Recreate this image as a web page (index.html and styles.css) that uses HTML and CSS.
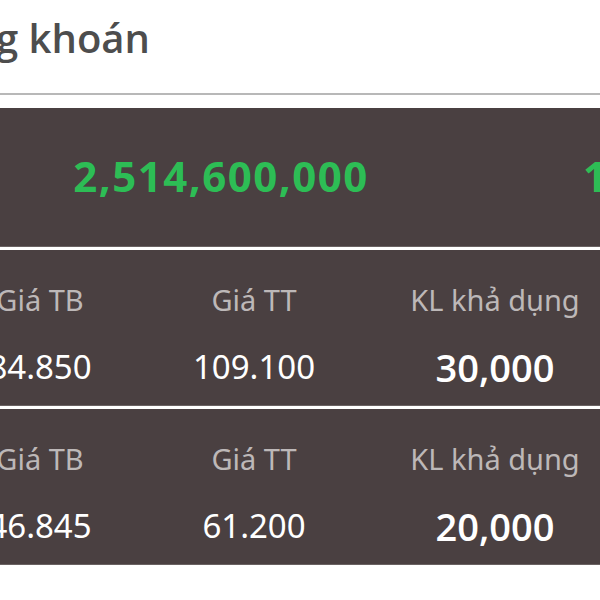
FILE: index.html
```html
<!DOCTYPE html>
<html lang="vi">
<head>
    <meta charset="UTF-8" />
    <meta name="viewport" content="width=device-width, initial-scale=1.0"/>
    <title>Chứng khoán</title>
    <link rel="stylesheet" href="styles.css">
</head>
<body>

<div class="page">

    <!-- Tiêu đề -->
    <div class="page-header">
        <h1>g khoán</h1>
    </div>

    <!-- Tổng giá trị -->
    <div class="panel panel-total">
        <div class="total-main">2,514,600,000</div>
        <div class="total-side">1</div>
    </div>

    <!-- Mã 1 -->
    <div class="panel stock-row">
        <div class="cell">
            <span class="cell-label">Giá TB</span>
            <span class="cell-value">84.850</span>
        </div>
        <div class="cell">
            <span class="cell-label">Giá TT</span>
            <span class="cell-value">109.100</span>
        </div>
        <div class="cell">
            <span class="cell-label">KL khả dụng</span>
            <span class="cell-value cell-value-big">30,000</span>
        </div>
    </div>

    <!-- Mã 2 -->
    <div class="panel stock-row">
        <div class="cell">
            <span class="cell-label">Giá TB</span>
            <span class="cell-value">46.845</span>
        </div>
        <div class="cell">
            <span class="cell-label">Giá TT</span>
            <span class="cell-value">61.200</span>
        </div>
        <div class="cell">
            <span class="cell-label">KL khả dụng</span>
            <span class="cell-value cell-value-big">20,000</span>
        </div>
    </div>

</div>

</body>
</html>
```

FILE: styles.css
```css
/* Trang */
* {
    box-sizing: border-box;
    margin: 0;
    padding: 0;
}

body {
    font-family: 'Noto Sans', 'Open Sans', sans-serif;
    background: #fff;
    width: 600px;
    height: 600px;
    overflow: hidden;
}

.page {
    width: 600px;
    overflow: hidden;
}

/* Tiêu đề */
.page-header {
    padding: 14px 0 31px 0;
    border-bottom: 2px solid #b8b8b8;
    margin-bottom: 13px;
}
.page-header h1 {
    font-family: 'Open Sans', 'Noto Sans', sans-serif;
    font-size: 40px;
    line-height: 48px;
    font-weight: 600;
    color: #4d4d4d;
    margin-left: -4px;
    white-space: nowrap;
}

/* Khối tối */
.panel {
    background: #4a4041;
    margin-bottom: 4px;
    box-shadow: 0 1px 0 #6a6262;
}

.panel-total {
    display: grid;
    grid-template-columns: 576px 1fr;
    margin-left: -67px;
    width: 667px;
    height: 138px;
    padding: 44px 0 46px 0;
}
.total-main,
.total-side {
    font-size: 42px;
    line-height: 48px;
    font-weight: 700;
    letter-spacing: 1.5px;
    color: #2dbd55;
    white-space: nowrap;
}
.total-main {
    text-align: center;
}
.total-side {
    padding-left: 74px;
}

/* Dòng cổ phiếu */
.stock-row {
    display: grid;
    grid-template-columns: 214px 214px 268px;
    margin-left: -67px;
    width: 667px;
    height: 155px;
    padding: 30px 0 16px 0;
}
.cell {
    display: flex;
    flex-direction: column;
    align-items: center;
    white-space: nowrap;
}
.cell-label {
    font-size: 29px;
    line-height: 40px;
    color: #bdb8b8;
}
.cell-value {
    margin-top: 25px;
    font-size: 33px;
    line-height: 44px;
    color: #fff;
}
.cell-value-big {
    font-family: 'Open Sans', 'Noto Sans', sans-serif;
    font-size: 38px;
    font-weight: 600;
}
```
